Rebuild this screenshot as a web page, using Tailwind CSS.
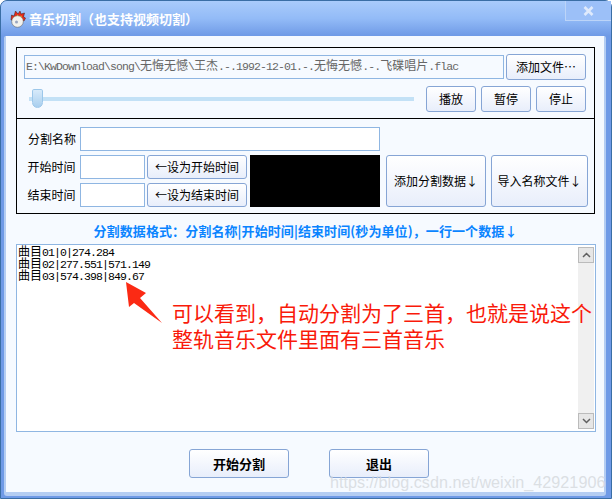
<!DOCTYPE html>
<html lang="en">
<head>
    <meta charset="UTF-8">
    <title>音乐切割</title>
    <script src="https://cdn.jsdelivr.net/npm/@tailwindcss/browser@4"></script>
</head>
<body class="w-[612px] h-[499px] overflow-hidden bg-white font-['Noto_Sans_CJK_SC',sans-serif] text-black">
    <div class="relative w-[612px] h-[499px] flex flex-col rounded-t-[7px] border border-[#3a6ea5] bg-[#6f9ae6]">
        <!-- title bar -->
        <header class="h-[35px] shrink-0 flex items-center pl-[8px] rounded-t-[6px] bg-gradient-to-b from-[#a9cbfb] via-[#93bbf7] to-[#6f9ae6]">
            <svg class="w-[18px] h-[18px]" viewBox="0 0 18 18">
                <path d="M2 10 L2.5 5 L5 6 L6.5 1 L9 4 L11 1 L12 4 L15.5 3 L14.5 7 L16.5 8 L15 11 Z" fill="#e8281a" stroke="#3a1a10" stroke-width="0.5"/>
                <path d="M4 9 L5 6.5 L7 7 L8.5 4.5 L10 6.5 L12.5 5.5 L12.5 8 L14 9 Z" fill="#ffd21f"/>
                <circle cx="8.5" cy="11.5" r="5.8" fill="#f2f2ee" stroke="#6a6a6a" stroke-width="0.6"/>
                <circle cx="7.5" cy="12" r="1.5" fill="#9aa6c0"/>
            </svg>
            <h1 class="ml-[2px] text-[13px] font-bold text-white whitespace-nowrap">音乐切割（也支持视频切割）</h1>
            <div class="ml-auto -mt-[15px] w-[46px] h-[20px] flex items-center justify-center border border-t-0 border-r-0 border-[#bcd4f8] bg-[#9cc0f8]">
                <svg class="w-[11px] h-[10px]" viewBox="0 0 11 10"><path d="M1.5 1 L9.5 9 M9.5 1 L1.5 9" stroke="#dfeafc" stroke-width="2.6"/></svg>
            </div>
        </header>

        <!-- client area -->
        <main class="ml-[3px] mr-[5px] h-[460px] flex flex-col rounded-t-[2px] rounded-b-[3px] border-x-2 border-b-4 border-t-0 border-[#b4cdf2] bg-[#f6faff] pt-[11px] pl-[10px] pr-[9px]">
            <section class="w-[579px] h-[72px] border border-black flex flex-col pl-[7px] pr-[8px] pt-[6px]">
                <div class="flex items-center gap-[2px]">
                    <div class="w-[481px] h-[24px] border border-[#8fb6e2] bg-[#f6faff] flex items-center pl-[1px] font-['Liberation_Mono','Noto_Sans_CJK_SC',monospace] text-[11.5px] tracking-[-0.9px] text-[#666] whitespace-pre overflow-hidden">E:\KwDownload\song\<span class="text-[12px] tracking-normal">无悔无憾</span>\<span class="text-[12px] tracking-normal">王杰</span>.-.1992-12-01.-.<span class="text-[12px] tracking-normal">无悔无憾</span>.-.<span class="text-[12px] tracking-normal">飞碟唱片</span>.flac</div>
                    <button class="w-[80px] h-[26px] rounded-[3px] border border-[#86a5d5] bg-gradient-to-b from-white to-[#e8eefb] text-[12px]">添加文件…</button>
                </div>
                <div class="flex items-center mt-[6px] h-[26px]">
                    <div class="relative w-[385px] h-[26px] ml-[5px] flex items-center">
                        <div class="w-full h-[4px] bg-[#c3e1f6]"></div>
                        <div class="absolute left-[3px] top-[3px] w-[11px] h-[19px] rounded-b-[6px] rounded-t-[2px] border border-[#9cc7ea] bg-gradient-to-b from-[#d7eafa] to-[#a9cfee]"></div>
                    </div>
                    <div class="ml-auto flex gap-[5px]">
                        <button class="w-[50px] h-[26px] rounded-[3px] border border-[#86a5d5] bg-gradient-to-b from-white to-[#e8eefb] text-[12px]">播放</button>
                        <button class="w-[50px] h-[26px] rounded-[3px] border border-[#86a5d5] bg-gradient-to-b from-white to-[#e8eefb] text-[12px]">暂停</button>
                        <button class="w-[50px] h-[26px] rounded-[3px] border border-[#86a5d5] bg-gradient-to-b from-white to-[#e8eefb] text-[12px]">停止</button>
                    </div>
                </div>
            </section>

            <section class="w-[579px] h-[96px] -mt-px border border-black flex pt-[8px] pl-[8px]">
                <div class="w-[355px] shrink-0 flex flex-col">
                    <div class="flex items-center h-[24px]">
                        <span class="w-[55px] shrink-0 text-[12px] text-center pr-[1px]">分割名称</span>
                        <div class="w-[300px] h-[24px] border border-[#8fb6e2] bg-white"></div>
                    </div>
                    <div class="flex mt-[4px] gap-[3px]">
                        <div class="flex flex-col gap-[4px] w-[222px] shrink-0">
                            <div class="flex items-center h-[24px]">
                                <span class="w-[55px] shrink-0 text-[12px] text-center pr-[2px]">开始时间</span>
                                <div class="w-[65px] shrink-0 h-[24px] border border-[#8fb6e2] bg-white"></div>
                                <button class="ml-[2px] shrink-0 w-[100px] h-[24px] rounded-[3px] border border-[#86a5d5] bg-gradient-to-b from-white to-[#e8eefb] text-[12px] whitespace-nowrap">←设为开始时间</button>
                            </div>
                            <div class="flex items-center h-[24px]">
                                <span class="w-[55px] shrink-0 text-[12px] text-center pr-[2px]">结束时间</span>
                                <div class="w-[65px] shrink-0 h-[24px] border border-[#8fb6e2] bg-white"></div>
                                <button class="ml-[2px] shrink-0 w-[100px] h-[24px] rounded-[3px] border border-[#86a5d5] bg-gradient-to-b from-white to-[#e8eefb] text-[12px] whitespace-nowrap">←设为结束时间</button>
                            </div>
                        </div>
                        <div class="w-[130px] h-[52px] shrink-0 bg-black"></div>
                    </div>
                </div>
                <div class="flex gap-[5px] ml-[6px] mt-[28px] h-[52px]">
                    <button class="w-[100px] h-[52px] rounded-[3px] border border-[#86a5d5] bg-gradient-to-b from-white to-[#e8eefb] text-[12px] whitespace-nowrap">添加分割数据↓</button>
                    <button class="w-[97px] h-[52px] rounded-[3px] border border-[#86a5d5] bg-gradient-to-b from-white to-[#e8eefb] text-[12px] whitespace-nowrap">导入名称文件↓</button>
                </div>
            </section>

            <p class="h-[30px] pt-[3px] flex items-center justify-center text-[13px] font-bold tracking-[0.1px] text-[#0a84ff] whitespace-nowrap">分割数据格式：分割名称|开始时间|结束时间(秒为单位)，一行一个数据↓</p>

            <section class="w-[580px] h-[188px] border border-[#8fb6e2] bg-white flex">
                <div class="flex-1 pl-[1px] pt-[2px] font-['Liberation_Mono','Noto_Sans_CJK_SC',monospace] text-[11.5px] leading-[12px] tracking-[-0.9px]">
                    <div class="whitespace-pre"><span class="text-[12px] tracking-normal">曲目</span>01|0|274.284</div>
                    <div class="whitespace-pre"><span class="text-[12px] tracking-normal">曲目</span>02|277.551|571.149</div>
                    <div class="whitespace-pre"><span class="text-[12px] tracking-normal">曲目</span>03|574.398|849.67</div>
                </div>
                <div class="w-[16px] my-[2px] mr-[1px] flex flex-col justify-between bg-[#f0f0f0]">
                    <div class="h-[16px] flex items-center justify-center border border-[#bbb] bg-[#e6e6e6]">
                        <svg class="w-[9px] h-[6px]" viewBox="0 0 9 6"><path d="M1 5 L4.5 1.5 L8 5" fill="none" stroke="#606060" stroke-width="1.5"/></svg>
                    </div>
                    <div class="h-[16px] flex items-center justify-center border border-[#bbb] bg-[#e6e6e6]">
                        <svg class="w-[9px] h-[6px]" viewBox="0 0 9 6"><path d="M1 1 L4.5 4.5 L8 1" fill="none" stroke="#606060" stroke-width="1.5"/></svg>
                    </div>
                </div>
            </section>

            <div class="flex mt-[17px] pl-[173px] gap-[40px]">
                <button class="w-[100px] h-[29px] rounded-[3px] border border-[#86a5d5] bg-gradient-to-b from-white to-[#e8eefb] text-[13px] font-bold">开始分割</button>
                <button class="w-[100px] h-[29px] rounded-[3px] border border-[#86a5d5] bg-gradient-to-b from-white to-[#e8eefb] text-[13px] font-bold">退出</button>
            </div>
        </main>

        <!-- annotation over the screenshot -->
        <svg class="absolute left-[122px] top-[279px] w-[42px] h-[45px]" viewBox="0 0 42 45">
            <path d="M3 2 L23 13 L17 18 L39 43 L11 23 L6 27 Z" fill="#fb2a14"/>
        </svg>
        <p class="absolute left-[171px] top-[298px] w-[436px] text-[21px] leading-[26px] text-[#f91a0a]">可以看到，自动分割为了三首，也就是说这个<br>整轨音乐文件里面有三首音乐</p>
        <span class="absolute left-[329px] top-[469px] font-['Liberation_Sans',sans-serif] text-[16.2px] text-[#d4d8dc]/80 whitespace-nowrap">https://blog.csdn.net/weixin_42921906</span>
    </div>
</body>
</html>
